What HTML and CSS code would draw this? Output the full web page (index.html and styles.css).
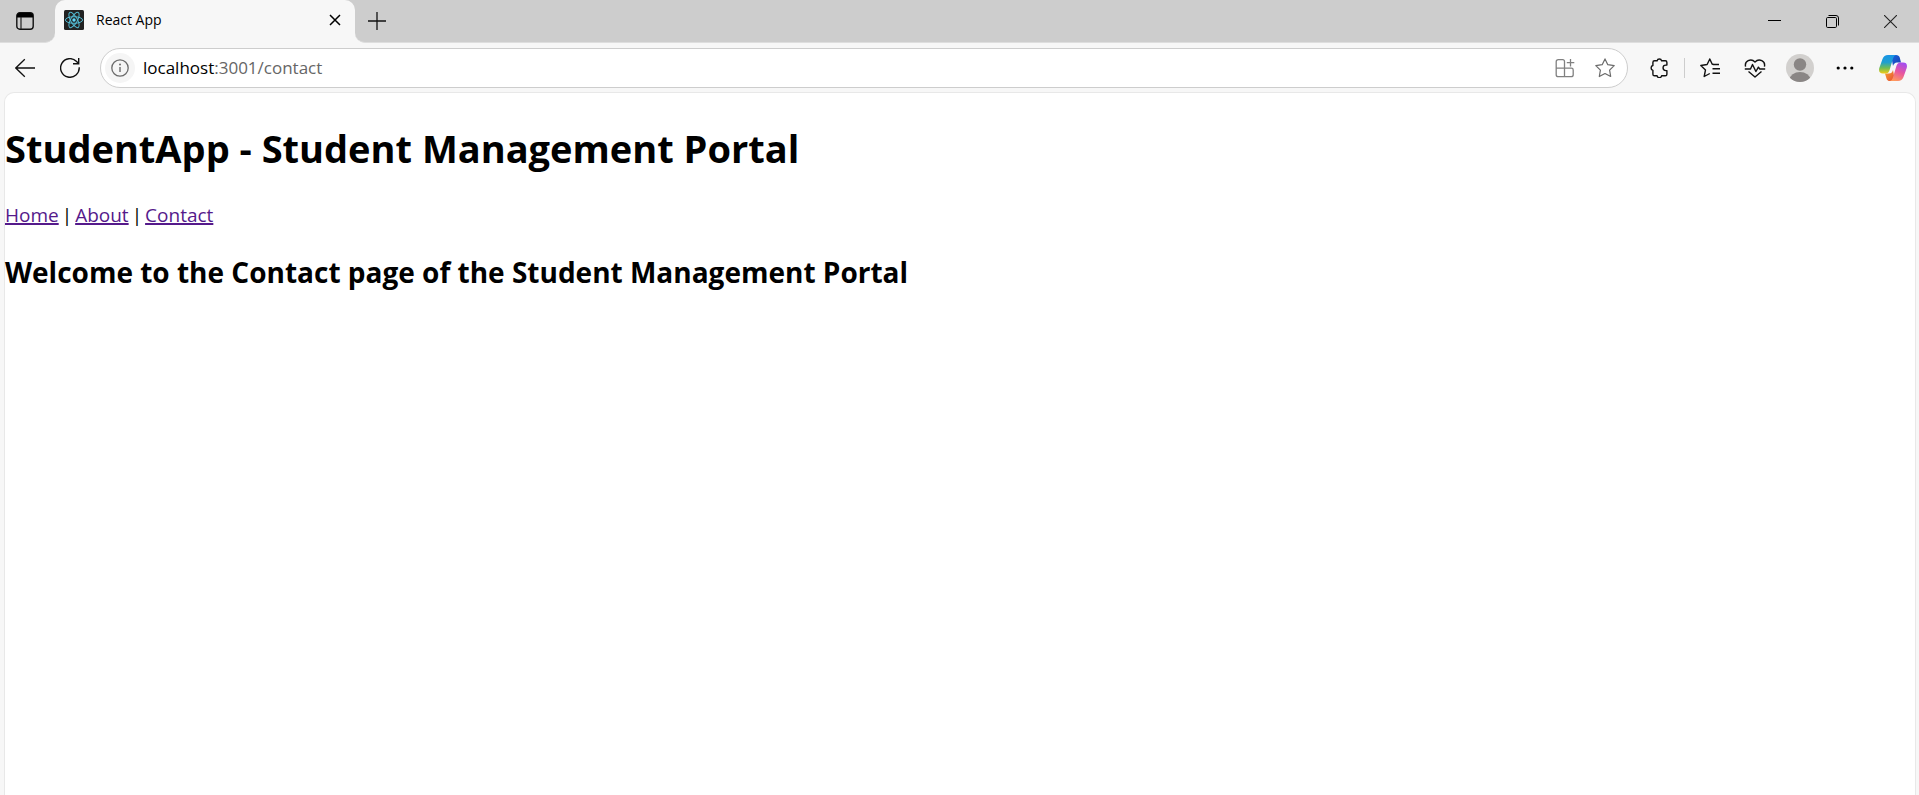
FILE: index.html
```html
<!DOCTYPE html>
<html lang="en">
<head>
<meta charset="utf-8">
<title>React App</title>
<link rel="stylesheet" href="styles.css">
</head>
<body>
<div class="browser">
  <div class="tab-strip">
    <div class="strip-start">
      <button class="icon-button" type="button" aria-label="Tab actions menu">
        <svg width="18" height="18" viewBox="0 0 18 18"><rect x=".8" y=".8" width="16.4" height="16.4" rx="3" fill="none" stroke="#111" stroke-width="1.4"/><path d="M1 5.5V3.5Q1 1 3.5 1h11Q17 1 17 3.500v2z" fill="#000"/><path d="M5 5v12" stroke="#222" stroke-width="1.2"/></svg>
      </button>
    </div>
    <div class="tab-slot">
      <div class="tab">
        <svg class="favicon" width="20" height="20" viewBox="0 0 20 20"><rect width="20" height="20" rx="1.500" fill="#222"/><g fill="none" stroke="#53b9d1" stroke-width="1"><ellipse cx="10" cy="10" rx="8.600" ry="3.300"/><ellipse cx="10" cy="10" rx="8.600" ry="3.300" transform="rotate(60 10 10)"/><ellipse cx="10" cy="10" rx="8.600" ry="3.300" transform="rotate(120 10 10)"/></g><circle cx="10" cy="10" r="1.700" fill="#61dafb"/></svg>
        <span class="tab-title">React App</span>
        <button class="tab-close" type="button" aria-label="Close tab">
          <svg width="12" height="12" viewBox="0 0 12 12"><path d="M1 1l10 10M11 1L1 11" stroke="#000" stroke-width="1.500"/></svg>
        </button>
      </div>
    </div>
    <div class="strip-end">
      <button class="icon-button" type="button" aria-label="New tab">
        <svg width="18" height="18" viewBox="0 0 18 18"><path d="M9 0v18M0 9h18" stroke="#111" stroke-width="1.300"/></svg>
      </button>
      <div class="window-controls">
        <button class="window-button" type="button" aria-label="Minimize">
          <svg width="13" height="13" viewBox="0 0 13 13"><path d="M0 5.500h13" stroke="#000"/></svg>
        </button>
        <button class="window-button" type="button" aria-label="Restore">
          <svg width="13" height="13" viewBox="0 0 13 13"><rect x=".5" y="2.500" width="10" height="10" rx="1.200" fill="none" stroke="#000"/><path d="M2.500.5h7.500q2.500 0 2.500 2.500v7.500" fill="none" stroke="#000"/></svg>
        </button>
        <button class="window-button" type="button" aria-label="Close">
          <svg width="13" height="13" viewBox="0 0 13 13"><path d="M0 0l13 13M13 0L0 13" stroke="#222" stroke-width="1.100"/></svg>
        </button>
      </div>
    </div>
  </div>

  <div class="toolbar">
    <button class="tool-button" type="button" aria-label="Back">
      <svg width="20" height="20" viewBox="0 0 20 20"><path d="M20 10H.8M9.800 1.200L.8 10l9 8.800" fill="none" stroke="#111" stroke-width="1.300"/></svg>
    </button>
    <button class="tool-button" type="button" aria-label="Refresh">
      <svg width="20" height="20" viewBox="0 0 20 20"><path d="M19.200 9.300A9.300 9.300 0 1 1 16.600 3.500L18.500 5.500M18.700 0v5.700H13" fill="none" stroke="#111" stroke-width="1.400"/></svg>
    </button>
    <div class="address-bar">
      <button class="site-info" type="button" aria-label="View site information">
        <svg width="18" height="18" viewBox="0 0 18 18"><circle cx="9" cy="9" r="8.200" fill="none" stroke="#6b6b6b" stroke-width="1.300"/><path d="M9 8v5" stroke="#6b6b6b" stroke-width="1.400"/><circle cx="9" cy="5.500" r="1" fill="#6b6b6b"/></svg>
      </button>
      <label class="address-host" for="address">localhost</label>
      <input class="address-input" id="address" type="text" value=":3001/contact" spellcheck="false">
      <button class="address-button" type="button" aria-label="App available">
        <svg width="20" height="20" viewBox="0 0 20 20"><path d="M9.500 19V3.500Q9.500 1.700 7.700 1.700H3.300Q1.200 1.700 1.200 3.800v12.900Q1.200 18.700 3.300 18.700h12.800q2.100 0 2.100-2V12q0-1.800-1.800-1.800H1.200M15.500 1v7.500M11.800 4.700h7.500" fill="none" stroke="#808080" stroke-width="1.300"/></svg>
      </button>
      <button class="address-button" type="button" aria-label="Add to favorites">
        <svg width="20" height="20" viewBox="0 0 20 20"><path d="M10 .9l2.800 5.800 6.400.9-4.600 4.500 1.100 6.400L10 15.500l-5.700 3 1.100-6.400L.8 7.600l6.400-.9z" fill="none" stroke="#6b6b6b" stroke-width="1.200" stroke-linejoin="round"/></svg>
      </button>
    </div>
    <button class="tool-button" type="button" aria-label="Extensions">
      <svg width="20" height="20" viewBox="0 0 20 20"><path d="M4.500 2.800h2.600a2.300 2.300 0 0 1 4.500 0h3.700q1.600 0 1.600 1.600v2.700h-1.100a2.700 2.700 0 0 0 0 5.500h1.100v3.600q0 1.600-1.600 1.600h-3.700a2.300 2.300 0 0 1-4.500 0H4.500q-1.600 0-1.600-1.600v-3.900a2.500 2.500 0 0 1 0-4.800V4.400q0-1.600 1.600-1.600z" fill="none" stroke="#111" stroke-width="1.400" stroke-linejoin="round"/></svg>
    </button>
    <span class="separator"></span>
    <button class="tool-button" type="button" aria-label="Favorites">
      <svg width="20" height="20" viewBox="0 0 20 20"><path d="M19 6.500h-5.500L12.100 6 9.800 1 7.100 6.500l-6.300 1 4.700 4.400-1.300 6.600 5.600-3M12.500 10.800H20M12.500 15.200H20" fill="none" stroke="#111" stroke-width="1.400" stroke-linejoin="round"/></svg>
    </button>
    <button class="tool-button" type="button" aria-label="Browser essentials">
      <svg width="22" height="20" viewBox="0 0 22 20"><path d="M1.600 8.700C.2 3.200 6.800-.2 11 3.900c4.200-4.100 10.800-.7 9.400 4.800M.8 11h5.700l2-4.500 3.400 7 2.500-4.300 1.400 1.800h5.400M4.500 13.500L11 19l6.500-5.500" fill="none" stroke="#111" stroke-width="1.400" stroke-linejoin="round"/></svg>
    </button>
    <button class="tool-button" type="button" aria-label="Profile">
      <svg width="28" height="28" viewBox="0 0 28 28"><defs><clipPath id="avatar-clip"><circle cx="14" cy="14" r="14"/></clipPath></defs><g clip-path="url(#avatar-clip)"><rect width="28" height="28" fill="#d2d0ce"/><circle cx="14" cy="10.500" r="6.200" fill="#8a8685"/><ellipse cx="14" cy="25.500" rx="10.300" ry="7.500" fill="#8a8685"/></g></svg>
    </button>
    <button class="tool-button" type="button" aria-label="Settings and more">
      <svg width="18" height="4" viewBox="0 0 18 4"><circle cx="2.200" cy="2" r="1.600"/><circle cx="9" cy="2" r="1.600"/><circle cx="15.800" cy="2" r="1.600"/></svg>
    </button>
    <button class="tool-button copilot" type="button" aria-label="Copilot">
      <svg width="28" height="26" viewBox="0 0 28 26">
        <defs>
          <linearGradient id="cp-left" x1="0" y1="0" x2="0" y2="1"><stop offset="0" stop-color="#1894e6"/><stop offset=".4" stop-color="#1f9fd0"/><stop offset=".7" stop-color="#6fbd55"/><stop offset="1" stop-color="#f3cb16"/></linearGradient>
          <linearGradient id="cp-right" x1=".7" y1="0" x2=".3" y2="1"><stop offset="0" stop-color="#a34df0"/><stop offset=".5" stop-color="#e8569f"/><stop offset="1" stop-color="#ff9a5c"/></linearGradient>
          <linearGradient id="cp-top" x1="0" y1="0" x2="1" y2="1"><stop offset="0" stop-color="#1765df"/><stop offset="1" stop-color="#1b3fae"/></linearGradient>
          <linearGradient id="cp-bottom" x1="0" y1="0" x2="1" y2="1"><stop offset="0" stop-color="#f8a52f"/><stop offset="1" stop-color="#e54b35"/></linearGradient>
        </defs>
        <path d="M12 0h5q3 0 3.800 2.800L22 7.500h-4q-3 0-4 3.500z" fill="url(#cp-top)"/>
        <path d="M16 26h-5q-3 0-3.600-2.800L6 18.500h4q3 0 4-3.500z" fill="url(#cp-bottom)"/>
        <path d="M9 0h8q-2 .5-2.800 3l-3.600 12q-1 3.500-4 3.500H4Q-1 18.500.3 13L3.500 4Q5 0 9 0z" fill="url(#cp-left)"/>
        <path d="M19 26h-8q2-.5 2.800-3l3.600-12q1-3.500 4-3.500H24q5 0 3.700 5.500L24.500 22Q23 26 19 26z" fill="url(#cp-right)"/>
      </svg>
    </button>
  </div>

  <main class="page">
    <h1 class="page-title">StudentApp - Student Management Portal</h1>
    <nav class="page-nav">
      <a href="#home">Home</a>
      <span>|</span>
      <a href="#about">About</a>
      <span>|</span>
      <a href="#contact">Contact</a>
    </nav>
    <h2 class="page-heading">Welcome to the Contact page of the Student Management Portal</h2>
  </main>
</div>
</body>
</html>
```

FILE: styles.css
```css
* {
  box-sizing: border-box;
}

body {
  margin: 0;
  font-family: "Segoe UI", "Open Sans", "Noto Sans", sans-serif;
  color: #000;
}

button {
  display: flex;
  align-items: center;
  justify-content: center;
  padding: 0;
  border: 0;
  background: none;
}

.browser {
  display: flex;
  flex-direction: column;
  min-height: 100vh;
  background: #f7f7f7;
}

/* Tab strip */
.tab-strip {
  display: flex;
  height: 43px;
}

.strip-start,
.strip-end {
  display: flex;
  align-items: center;
  background: #cdcdcd;
  border-bottom: 1px solid #dedede;
}

.strip-start {
  width: 55px;
  border-bottom-right-radius: 10px;
}

.strip-end {
  flex: 1;
  border-bottom-left-radius: 10px;
}

.icon-button {
  width: 42px;
  height: 40px;
}

.strip-start .icon-button {
  margin-left: 4px;
}

.strip-end .icon-button {
  width: 44px;
}

.tab-slot {
  width: 300px;
  background: linear-gradient(#cdcdcd 50%, #f7f7f7 50%);
}

.tab {
  display: flex;
  align-items: center;
  height: 100%;
  padding: 0 10px 3px 9px;
  border-radius: 10px 10px 0 0;
  background: #f7f7f7;
}

.tab-title {
  flex: 1;
  margin-left: 12px;
  font-size: 14px;
  line-height: 20px;
}

.tab-close {
  width: 20px;
  height: 20px;
}

.window-controls {
  display: flex;
  margin-left: auto;
}

.window-button {
  width: 58px;
  height: 42px;
}

/* Toolbar */
.toolbar {
  display: flex;
  align-items: center;
  height: 49px;
  padding: 1px 4px 0 2px;
}

.tool-button {
  width: 45px;
  height: 40px;
}

.separator {
  width: 1px;
  height: 20px;
  margin: 0 2px;
  background: #cdcdcd;
}

.copilot {
  margin-left: 3px;
}

.address-bar {
  display: flex;
  flex: 1;
  align-items: center;
  height: 40px;
  margin: 0 9px 0 8px;
  padding: 0 2px 0 4px;
  border: 1px solid #cdcdcd;
  border-radius: 20px;
  background: #fff;
}

.site-info {
  width: 30px;
  height: 30px;
  border-radius: 15px;
  background: #f5f5f5;
}

.address-host,
.address-input {
  font: inherit;
  font-size: 17px;
  line-height: 24px;
}

.address-host {
  margin-left: 8px;
}

.address-input {
  flex: 1;
  min-width: 0;
  padding: 0;
  border: 0;
  outline: 0;
  background: none;
  color: #666;
}

.address-button {
  width: 40px;
  height: 30px;
}

/* Web page */
.page {
  flex: 1;
  margin: 0 3px 0 4px;
  border: 1px solid #e8e8e8;
  border-width: 1px 1px 0;
  border-radius: 10px 10px 0 0;
  background: #fff;
}

.page-title {
  margin: 28px 0;
  font-size: 38px;
  line-height: 54px;
}

.page-nav {
  display: flex;
  gap: 3px;
  font-size: 19px;
  line-height: 24px;
}

.page-nav a {
  color: #551a8b;
  text-decoration-thickness: 2px;
}

.page-heading {
  margin: 25px 0;
  font-size: 28px;
  line-height: 40px;
}
```
